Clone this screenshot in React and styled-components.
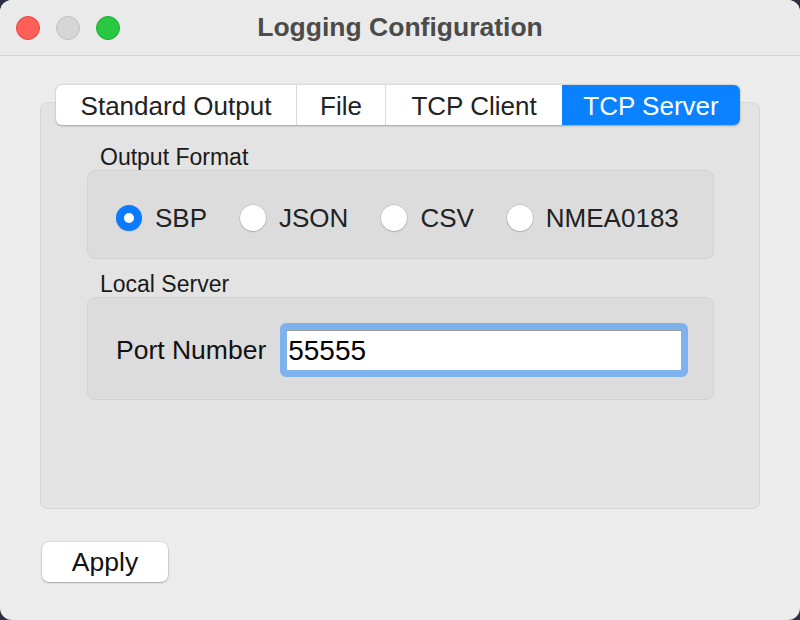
import styled, { createGlobalStyle } from "styled-components";

const GlobalStyle = createGlobalStyle`
  html, body {
    margin: 0;
    padding: 0;
    background: #2b3040;
  }
  body {
    font-family: "Liberation Sans", Arial, sans-serif;
  }
`;

const Window = styled.div`
  width: 800px;
  height: 620px;
  background: #ececec;
  border-radius: 12px;
  overflow: hidden;
  display: flex;
  flex-direction: column;
  box-sizing: border-box;
`;

const TitleBar = styled.div`
  height: 56px;
  flex: none;
  display: grid;
  grid-template-columns: 1fr auto 1fr;
  align-items: center;
  background: #ebeaea;
  border-bottom: 1px solid #d2d2d2;
  box-sizing: border-box;
`;

const Lights = styled.div`
  display: flex;
  gap: 16px;
  padding-left: 16px;
`;

const Light = styled.span`
  width: 24px;
  height: 24px;
  border-radius: 50%;
  box-sizing: border-box;
  background: ${(p) => p.$fill};
  border: 1px solid ${(p) => p.$edge};
`;

const Title = styled.h1`
  margin: 0;
  font-size: 26.5px;
  font-weight: 700;
  color: #4b4b4b;
  padding-bottom: 1px;
`;

const Body = styled.div`
  flex: 1;
  display: flex;
  flex-direction: column;
  padding: 29px 40px 0 40px;
`;

const TabBar = styled.div`
  position: relative;
  z-index: 1;
  align-self: center;
  margin-left: -4px;
  display: flex;
  height: 40px;
  background: #fff;
  border-radius: 6px;
  box-shadow: 0 0.5px 2px rgba(0, 0, 0, 0.3);
  overflow: hidden;
`;

const Tab = styled.div`
  width: ${(p) => p.$w}px;
  display: flex;
  align-items: center;
  justify-content: center;
  padding-top: 2px;
  font-size: 26px;
  color: ${(p) => (p.$active ? "#fff" : "#222")};
  background: ${(p) => (p.$active ? "#0a82ff" : "transparent")};
  border-left: ${(p) => (p.$first || p.$active ? "none" : "1px solid #dadada")};
  box-sizing: border-box;
`;

const Panel = styled.div`
  margin-top: -23px;
  height: 407px;
  box-sizing: border-box;
  background: #e3e3e3;
  border: 1px solid #d6d6d6;
  border-radius: 7px;
  padding: 42px 45px 0 46px;
  display: flex;
  flex-direction: column;
`;

const GroupLabel = styled.div`
  font-size: 23px;
  line-height: 24px;
  color: #1a1a1a;
  padding-left: 13px;
  margin-bottom: 1px;
`;

const Group = styled.div`
  height: ${(p) => p.$h}px;
  box-sizing: border-box;
  background: #dcdcdc;
  border: 1px solid #d2d2d2;
  border-radius: 8px;
  display: flex;
  align-items: center;
  padding-left: ${(p) => p.$pl}px;
  padding-top: ${(p) => p.$pt || 0}px;
  margin-bottom: ${(p) => p.$mb || 0}px;
`;

const RadioRow = styled.div`
  display: flex;
  align-items: center;
  gap: 33px;
`;

const RadioItem = styled.label`
  display: flex;
  align-items: center;
  gap: 13px;
  font-size: 26px;
  color: #222;
`;

const RadioDot = styled.span`
  width: 26px;
  height: 26px;
  border-radius: 50%;
  box-sizing: border-box;
  display: flex;
  align-items: center;
  justify-content: center;
  background: ${(p) => (p.$on ? "#0a7bff" : "#fff")};
  box-shadow: ${(p) =>
    p.$on
      ? "0 0.5px 1px rgba(0,0,0,0.2)"
      : "0 0 0 0.5px rgba(0,0,0,0.18), 0 1px 1.5px rgba(0,0,0,0.15)"};
  &::after {
    content: "";
    display: ${(p) => (p.$on ? "block" : "none")};
    width: 10px;
    height: 10px;
    border-radius: 50%;
    background: #fff;
  }
`;

const FieldLabel = styled.span`
  font-size: 26.5px;
  color: #111;
  margin-right: 14px;
`;

const InputRing = styled.div`
  width: 408px;
  height: 54px;
  box-sizing: border-box;
  border: 4px solid #7fb1ec;
  border-radius: 6px;
  padding: 3px;
  background: #7fb1ec;
  display: flex;
`;

const Input = styled.input`
  flex: 1;
  min-width: 0;
  border: none;
  border-top: 1px solid #9a9a9a;
  background: #fff;
  font-family: "Liberation Sans", Arial, sans-serif;
  font-size: 28px;
  color: #000;
  padding: 0 1px;
  outline: none;
`;

const Footer = styled.div`
  padding: 33px 0 0 2px;
`;

const Button = styled.button`
  width: 126px;
  height: 40px;
  background: #fff;
  border: none;
  border-radius: 7px;
  box-shadow: 0 0 0 0.5px rgba(0, 0, 0, 0.12), 0 1px 2px rgba(0, 0, 0, 0.25);
  font-family: "Liberation Sans", Arial, sans-serif;
  font-size: 26.5px;
  color: #111;
  padding: 0;
`;

const tabs = [
  { name: "Standard Output", w: 240 },
  { name: "File", w: 89 },
  { name: "TCP Client", w: 177 },
  { name: "TCP Server", w: 178, active: true },
];

const formats = ["SBP", "JSON", "CSV", "NMEA0183"];

export default function App() {
  return (
    <>
      <GlobalStyle />
      <Window>
        <TitleBar>
          <Lights>
            <Light $fill="#ff5f57" $edge="#e2463f" />
            <Light $fill="#d7d6d6" $edge="#c1c0c0" />
            <Light $fill="#28c840" $edge="#1fa934" />
          </Lights>
          <Title>Logging Configuration</Title>
          <span />
        </TitleBar>
        <Body>
          <TabBar>
            {tabs.map((t, i) => (
              <Tab key={t.name} $w={t.w} $active={t.active} $first={i === 0}>
                {t.name}
              </Tab>
            ))}
          </TabBar>
          <Panel>
            <GroupLabel>Output Format</GroupLabel>
            <Group $h={89} $pl={28} $pt={7} $mb={13}>
              <RadioRow>
                {formats.map((f, i) => (
                  <RadioItem key={f}>
                    <RadioDot $on={i === 0} />
                    {f}
                  </RadioItem>
                ))}
              </RadioRow>
            </Group>
            <GroupLabel>Local Server</GroupLabel>
            <Group $h={103} $pl={28} $pt={3}>
              <FieldLabel>Port Number</FieldLabel>
              <InputRing>
                <Input defaultValue="55555" />
              </InputRing>
            </Group>
          </Panel>
          <Footer>
            <Button>Apply</Button>
          </Footer>
        </Body>
      </Window>
    </>
  );
}
